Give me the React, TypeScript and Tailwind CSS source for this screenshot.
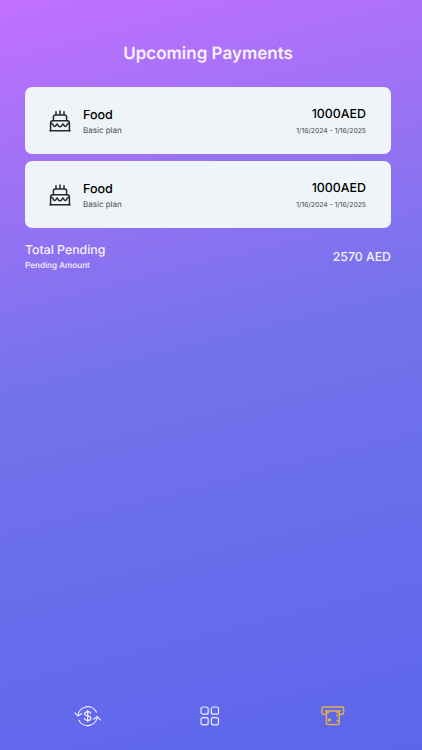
const payments = [
  { id: 1, name: "Food", plan: "Basic plan", amount: "1000AED", period: "1/16/2024 - 1/16/2025" },
  { id: 2, name: "Food", plan: "Basic plan", amount: "1000AED", period: "1/16/2024 - 1/16/2025" },
];

function CakeIcon() {
  return (
    <svg
      width="22"
      height="22"
      viewBox="0 0 22 22"
      fill="none"
      stroke="#23282d"
      strokeWidth="1.5"
      strokeLinecap="round"
      strokeLinejoin="round"
    >
      <path d="M7 1.8v2.6M11 0.9v3.5M15 1.8v2.6" />
      <path d="M4.4 10.8V7c0-1.3.7-2.1 2-2.1h9.2c1.3 0 2 .8 2 2.1v3.8" />
      <path d="M1.6 20.6v-7.5c0-1.5.8-2.3 2.2-2.3h14.4c1.4 0 2.2.8 2.2 2.3v7.5" />
      <path d="M1.8 13.6c1.6 0 1.8-.2 2.4 1.4.8 2 2.2 2 3 0 .5-1.4 1.2-1.4 1.7 0 .9 2.4 3.3 2.4 4.2 0 .5-1.4 1.2-1.4 1.7 0 .8 2 2.2 2 3 0 .6-1.6.8-1.4 2.4-1.4" />
      <path d="M0.9 20.8h20.2" />
    </svg>
  );
}

function CycleIcon() {
  return (
    <svg
      width="27"
      height="24"
      viewBox="0 0 27 24"
      fill="none"
      stroke="#f1effd"
      strokeWidth="1.2"
      strokeLinecap="round"
      strokeLinejoin="round"
    >
      <path d="M4 11.7A9.8 9.8 0 0 1 22.6 8.2" />
      <path d="M23.3 12.8A9.8 9.8 0 0 1 4.8 16.2" />
      <path d="M1 8.9l3 3.1 3.9-2.4" />
      <path d="M19.6 15.2l3.7-2.6 3 3.3" />
      <path d="M13.7 6.3v11.4M16.7 9.3c-.3-1.1-1.4-1.7-3-1.7-1.8 0-3 .8-3 2.1 0 3.1 6.2 1.4 6.2 4.5 0 1.4-1.3 2.2-3.2 2.2-1.8 0-3-.8-3.3-2" />
    </svg>
  );
}

function GridIcon() {
  return (
    <svg width="20" height="20" viewBox="0 0 20 20" fill="none" stroke="#f1effd" strokeWidth="1.2">
      <rect x="1" y="1" width="7.2" height="7.2" rx="2" />
      <rect x="11.3" y="1" width="7.2" height="7.2" rx="2" />
      <rect x="1" y="11.6" width="7.2" height="7.2" rx="2" />
      <rect x="11.3" y="11.6" width="7.2" height="7.2" rx="2" />
    </svg>
  );
}

function AtmIcon() {
  return (
    <svg
      width="24"
      height="20"
      viewBox="0 0 24 20"
      fill="none"
      stroke="#e3b04b"
      strokeWidth="1.5"
      strokeLinejoin="round"
    >
      <path d="M5.3 8.2H2.3c-.8 0-1.3-.5-1.3-1.3V2.4c0-.8.5-1.3 1.3-1.3h19c.8 0 1.3.5 1.3 1.3v4.5c0 .8-.5 1.3-1.3 1.3h-3" />
      <path d="M3.8 5h16" />
      <path d="M5.4 5v12.3c0 .8.5 1.3 1.3 1.3h10.2c.8 0 1.3-.5 1.3-1.3V5" />
      <path d="M6 6.4h2M15.4 6.4h2M15.4 9.4h2M15.4 14.6h2" strokeWidth="1.9" />
      <circle cx="8.4" cy="14" r="1.7" fill="#e3b04b" stroke="none" />
    </svg>
  );
}

function PaymentCard({ payment }: any) {
  return (
    <div className="flex h-[67px] items-center justify-between rounded-[7px] bg-[#eef4f8] pr-[25px] pl-6">
      <div className="flex items-center">
        <CakeIcon />
        <div className="ml-3 pt-[3px]">
          <p className="text-[12.5px] leading-4 font-medium text-black">{payment.name}</p>
          <p className="text-[8px] leading-3 text-[#45494e]">{payment.plan}</p>
        </div>
      </div>
      <div className="pt-0.5 text-right">
        <p className="text-[12.4px] leading-4 font-medium text-black">{payment.amount}</p>
        <p className="mt-[3px] text-[6.8px] leading-3 text-[#45494e]">{payment.period}</p>
      </div>
    </div>
  );
}

export default function App() {
  return (
    <div className="flex h-[750px] w-[422px] flex-col bg-[linear-gradient(166deg,#c270ff_0%,#7373eb_47%,#5c65ec_100%)] font-['Inter',sans-serif] [text-rendering:geometricPrecision]">
      <h1 className="mt-[42px] pr-1.5 text-center text-[17px] leading-6 font-semibold text-[#f9f2ff]">
        Upcoming Payments
      </h1>
      <div className="mt-[21px] mr-[31px] ml-[25px] flex flex-col gap-[7px]">
        {payments.map((payment) => (
          <PaymentCard key={payment.id} payment={payment} />
        ))}
      </div>
      <div className="mt-3.5 mr-[31px] ml-[25px] flex items-center justify-between text-[#f6f2ff]">
        <div>
          <p className="text-[12.3px] leading-4 font-medium">Total Pending</p>
          <p className="mt-px text-[8.2px] leading-3 font-medium">Pending Amount</p>
        </div>
        <p className="text-[12.3px] leading-4 font-medium">2570 AED</p>
      </div>
      <div className="mt-auto mb-[22px] flex h-6 items-center justify-between pr-[77px] pl-[74px]">
        <CycleIcon />
        <div className="pr-[3px]">
          <GridIcon />
        </div>
        <AtmIcon />
      </div>
    </div>
  );
}
